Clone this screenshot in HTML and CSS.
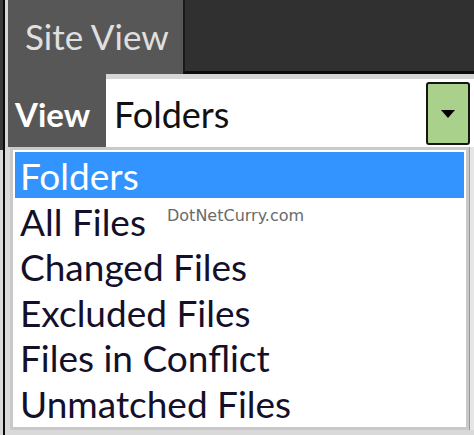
FILE: index.html
```html
<!DOCTYPE html>
<html>
<head>
<meta charset="utf-8">
<link rel="stylesheet" href="styles.css">
</head>
<body>
<div class="window">
  <div class="frame">
    <div class="tabbar">
      <div class="tab">Site View</div>
      <div class="tabrest"></div>
    </div>
    <div class="toolbar">
      <div class="label">View</div>
      <div class="combo">
        <div class="combo-text">Folders</div>
        <div class="combo-btn">
          <svg width="16" height="10" viewBox="0 0 16 10"><polygon points="1,1 15,1 8,9" fill="#000"/></svg>
        </div>
      </div>
    </div>
    <div class="listrow">
      <div class="list">
        <div class="item selected">Folders</div>
        <div class="item">All Files</div>
        <div class="item">Changed Files</div>
        <div class="item">Excluded Files</div>
        <div class="item">Files in Conflict</div>
        <div class="item">Unmatched Files</div>
        <div class="watermark">DotNetCurry.com</div>
      </div>
      <div class="side"></div>
    </div>
  </div>
</div>
</body>
</html>
```

FILE: styles.css
```css
html, body {
  margin: 0;
  padding: 0;
  width: 474px;
  height: 435px;
  overflow: hidden;
  background: #dcdcdc;
  font-family: "Lato", "Open Sans", sans-serif;
}
.window {
  padding-left: 3px;
  background: linear-gradient(#3a3a3a 0 150px, #d8d8d8 150px);
  height: 435px;
  box-sizing: border-box;
}
.frame {
  border-left: 2px solid #0a0a0a;
  padding-left: 3px;
  height: 435px;
  box-sizing: border-box;
  background: #d9d9d9;
}
.tabbar {
  display: flex;
  height: 74px;
  background: #575757;
}
.tab {
  width: 175px;
  height: 74px;
  box-sizing: border-box;
  background: #575757;
  border-radius: 7px 7px 0 0;
  color: #e0e0e0;
  font-size: 35px;
  line-height: 46px;
  padding: 13px 0 0 17px;
  white-space: nowrap;
}
.tabrest {
  flex: 1;
  background: #303030;
  border-left: 2px solid #1a1a1a;
  border-bottom: 3px solid #0c0c0c;
  height: 71px;
}
.toolbar {
  display: flex;
  height: 73px;
}
.label {
  width: 98px;
  background: #575757;
  color: #ffffff;
  font-weight: 700;
  font-size: 33px;
  line-height: 46px;
  padding: 17px 0 0 7px;
  box-sizing: border-box;
}
.combo {
  flex: 1;
  display: flex;
  background: #ffffff;
  border-top: 5px solid #d6d6d6;
}
.combo-text {
  flex: 1;
  font-size: 36px;
  line-height: 46px;
  padding: 12px 0 0 8px;
  color: #111;
}
.combo-btn {
  width: 44px;
  height: 63px;
  margin: 3px 4px 0 0;
  box-sizing: border-box;
  background: #a9d18c;
  border: 2px solid #151515;
  border-radius: 3px;
  display: flex;
  align-items: center;
  justify-content: center;
}
.listrow {
  display: flex;
  height: 283px;
}
.list {
  position: relative;
  margin-left: 2px;
  width: 459px;
  box-sizing: border-box;
  border: 3px solid #c9c9c9;
  background: #ffffff;
  padding: 2px 2px 0 2px;
}
.side {
  flex: 1;
  background: #e6e6e6;
  border-left: 1px solid #9a9a9a;
}
.item {
  height: 45.6px;
  box-sizing: border-box;
  line-height: 41.6px;
  padding: 3px 0 0 5px;
  font-size: 37px;
  color: #14102a;
  white-space: nowrap;
}
.item.selected {
  background: #3393ff;
  color: #ffffff;
}
.watermark {
  position: absolute;
  left: 154px;
  top: 56px;
  font-family: "DejaVu Sans", sans-serif;
  font-size: 16px;
  line-height: 20px;
  color: #6a6a6a;
}
```
